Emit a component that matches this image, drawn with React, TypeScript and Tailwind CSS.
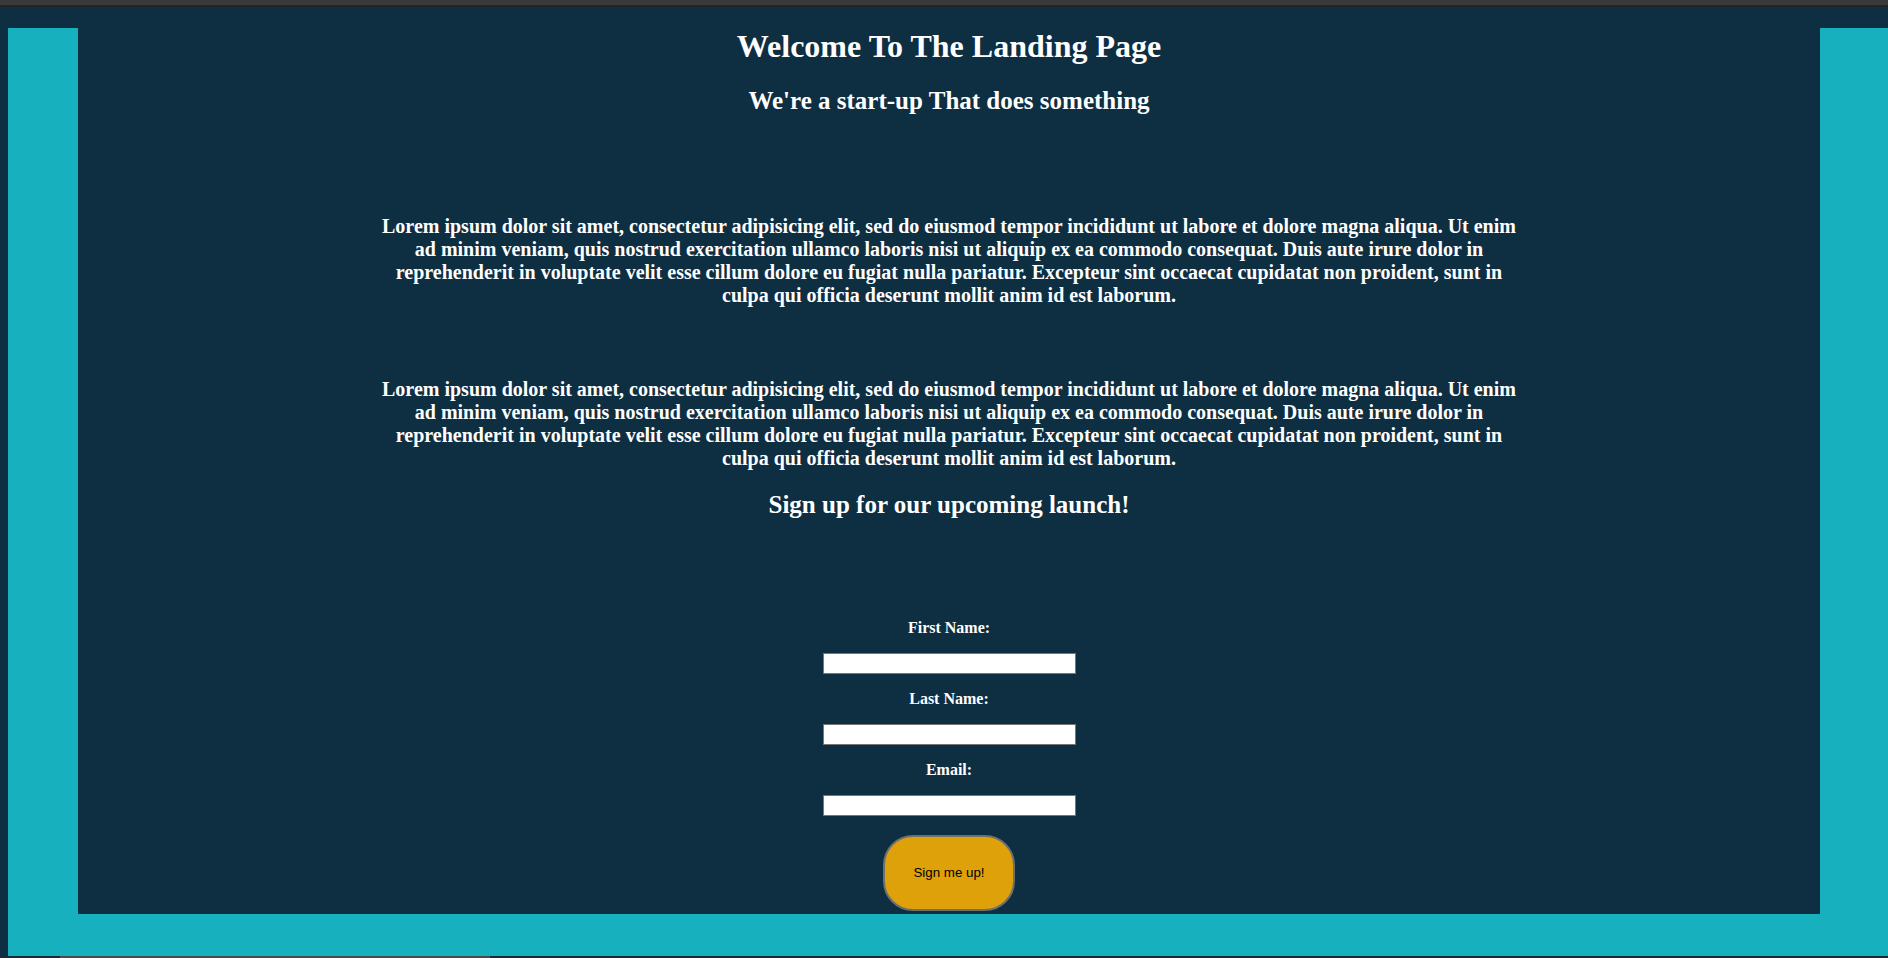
const lorem =
  "Lorem ipsum dolor sit amet, consectetur adipisicing elit, sed do eiusmod tempor incididunt ut labore et dolore magna aliqua. Ut enim ad minim veniam, quis nostrud exercitation ullamco laboris nisi ut aliquip ex ea commodo consequat. Duis aute irure dolor in reprehenderit in voluptate velit esse cillum dolore eu fugiat nulla pariatur. Excepteur sint occaecat cupidatat non proident, sunt in culpa qui officia deserunt mollit anim id est laborum.";

function Field({ label, first }: { label: string; first?: boolean }) {
  return (
    <div className={first ? "flex flex-col items-center" : "flex flex-col items-center mt-[16px]"}>
      <label className="text-[16px] leading-[18px] font-bold">{label}</label>
      <input type="text" className="mt-[16px] w-[253px] h-[21px] bg-white border border-[#767676]" />
    </div>
  );
}

export default function App() {
  return (
    <div className="min-h-screen bg-[#0e2e42] text-white" style={{ fontFamily: '"Liberation Serif", "Times New Roman", serif' }}>
      <div className="h-[5px] bg-[#3a3a3c]" />
      <div className="h-[2px] bg-[#252525]" />
      <div className="flex">
        <div className="w-[78px] pl-[8px] flex flex-col">
          <div className="h-[21px]" />
          <div className="flex-1 bg-[#16b0bf]" />
        </div>
        <main className="flex-1 h-[907px] flex flex-col items-center text-center">
          <h1 className="mt-[21px] text-[32px] leading-[37px] font-bold">Welcome To The Landing Page</h1>
          <h2 className="mt-[21px] text-[25px] leading-[29px] font-bold">We're a start-up That does something</h2>
          <p className="mt-[100px] w-[1150px] text-[20px] leading-[23px] font-bold">{lorem}</p>
          <p className="mt-[71px] w-[1150px] text-[20px] leading-[23px] font-bold">{lorem}</p>
          <h2 className="mt-[20px] text-[25px] leading-[29px] font-bold">Sign up for our upcoming launch!</h2>
          <form className="mt-[100px] flex flex-col items-center">
            <Field label="First Name:" first />
            <Field label="Last Name:" />
            <Field label="Email:" />
            <button
              type="button"
              className="mt-[19px] w-[132px] h-[76px] rounded-[30px] bg-[#dea109] border-2 border-[#6f6f6f] text-black text-[13.33px]"
              style={{ fontFamily: '"Liberation Sans", Arial, sans-serif' }}
            >
              Sign me up!
            </button>
          </form>
        </main>
        <div className="w-[68px] flex flex-col">
          <div className="h-[21px]" />
          <div className="flex-1 bg-[#16b0bf]" />
        </div>
      </div>
      <div className="ml-[8px] h-[42px] bg-[#16b0bf]" />
      <div className="h-[2px] bg-[#1c2a32] flex">
        <div className="ml-[60px] w-[430px] bg-[#4a4a4a]" />
      </div>
    </div>
  );
}
